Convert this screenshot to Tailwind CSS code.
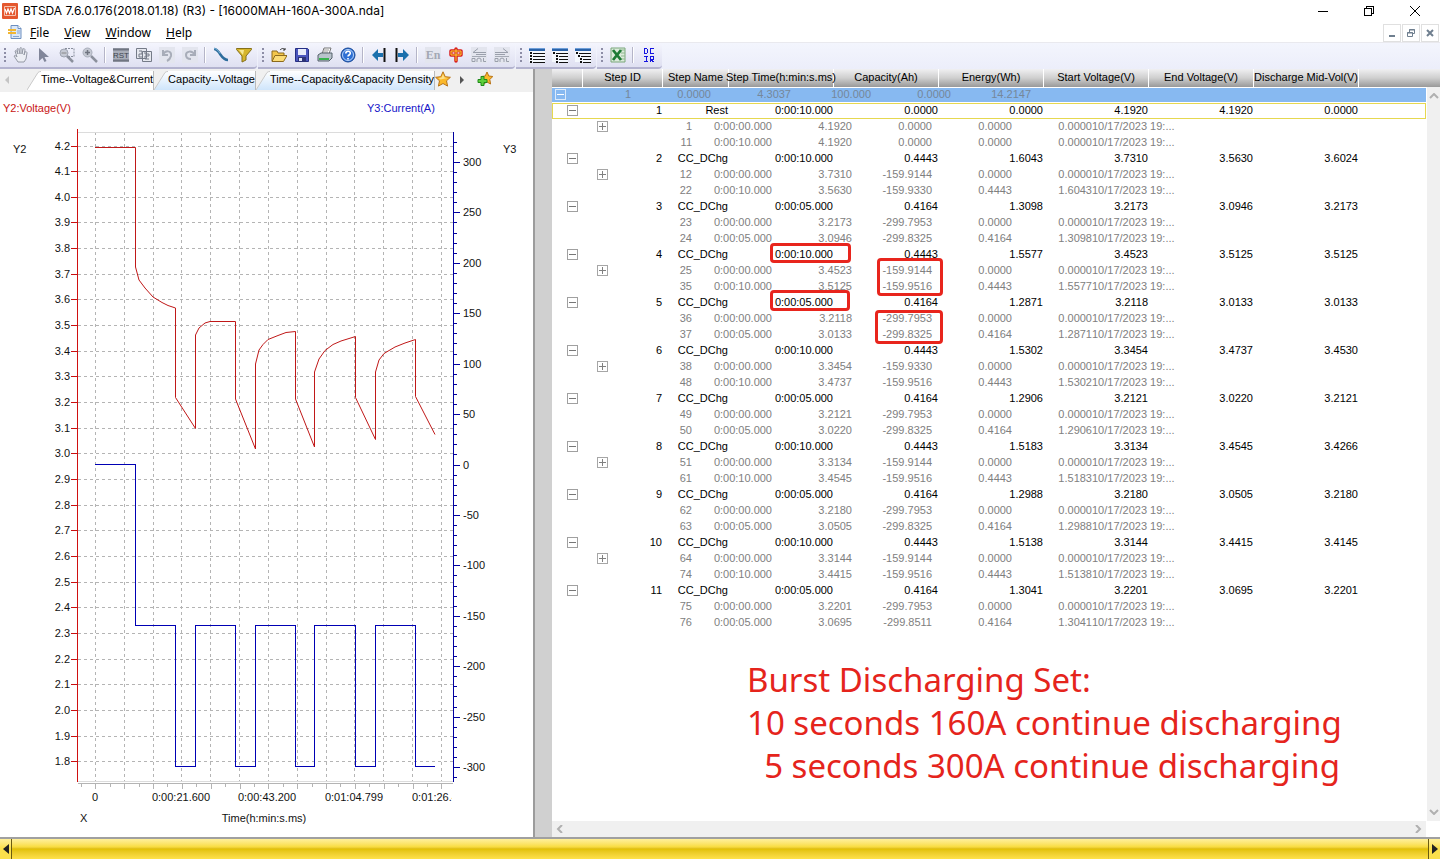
<!DOCTYPE html>
<html lang="en">
<head>
<meta charset="utf-8">
<title>BTSDA 7.6.0.176</title>
<script src="https://cdn.jsdelivr.net/npm/@tailwindcss/browser@4"></script>
</head>
<body class="flex h-screen flex-col overflow-hidden bg-white font-['Liberation_Sans',Arial,sans-serif] text-[11px] leading-4 text-black">

<!-- Title bar -->
<header class="flex h-[22px] shrink-0 items-center pr-0.5 pl-0.5 text-xs">
  <svg class="size-4" viewBox="0 0 16 16"><rect width="16" height="16" rx="1" fill="#e4572e"/><path d="M2.500 3.500h11v9h-11z" fill="none" stroke="#f6c3ae"/><path d="M3 6l1.500 4L6 6l1.500 4L9 6l1.500 4L12.500 5" fill="none" stroke="#fff" stroke-width="1.200"/></svg>
  <h1 class="ml-[5px] flex-1 font-[Inter,'Noto_Sans',sans-serif] whitespace-nowrap">BTSDA 7.6.0.176(2018.01.18) (R3) - [16000MAH-160A-300A.nda]</h1>
  <button aria-label="Minimize" class="flex h-full w-[46px] items-center justify-center"><svg class="size-3" viewBox="0 0 12 12" shape-rendering="crispEdges"><path d="M1 6.500h10" stroke="#000"/></svg></button>
  <button aria-label="Restore" class="flex h-full w-[46px] items-center justify-center"><svg class="size-3" viewBox="0 0 12 12" fill="none" stroke="#000" shape-rendering="crispEdges"><path d="M1.500 3.500h7v7h-7zM3.500 3.500v-2h7v7h-2"/></svg></button>
  <button aria-label="Close" class="flex h-full w-[46px] items-center justify-center"><svg class="size-3" viewBox="0 0 12 12"><path d="M1 1l10 10M11 1L1 11" stroke="#000"/></svg></button>
</header>

<!-- Menu bar -->
<nav class="flex h-5 shrink-0 items-center pl-2 font-['Noto_Sans','Open_Sans',sans-serif] text-xs">
  <svg class="size-[14px]" viewBox="0 0 14 14"><path d="M3 .5h7l3 3v10H3z" fill="#dbe8f8" stroke="#6c8fc0"/><path d="M10 .5v3h3" fill="#fff" stroke="#6c8fc0"/><path d="M5 11.500h6M9 6h3M9 8h3" stroke="#8aa6cf"/><path d="M0 4h8v2H0zM0 7h8v2H0z" fill="#f2b632"/></svg>
  <div class="ml-2 flex flex-1 gap-[15px] pt-0.5">
    <button><u>F</u>ile</button><button><u>V</u>iew</button><button><u>W</u>indow</button><button><u>H</u>elp</button>
  </div>
  <div class="flex gap-px pt-0.5 pr-px text-[#6f7f8f]">
    <button aria-label="Minimize document" class="flex size-[18px] items-center justify-center border border-[#e0e0e0]"><svg class="size-3" viewBox="0 0 12 12"><path d="M3 9h6" stroke="currentColor" stroke-width="2"/></svg></button>
    <button aria-label="Restore document" class="flex size-[18px] items-center justify-center border border-[#e0e0e0]"><svg class="size-3" viewBox="0 0 12 12" fill="none" stroke="currentColor"><path d="M2.500 5.500h5v4h-5zM2 6h6M4.500 5V2.500h5v4H8M4 3h6"/></svg></button>
    <button aria-label="Close document" class="flex size-[18px] items-center justify-center border border-[#e0e0e0]"><svg class="size-3" viewBox="0 0 12 12"><path d="M3 3l6 6M9 3L3 9" stroke="currentColor" stroke-width="2"/></svg></button>
  </div>
</nav>

<!-- Toolbars -->
<div class="flex h-[27px] shrink-0 gap-px border-t border-[#e9e9ee] bg-linear-to-b from-[#f3f5fd] to-[#eceefa]" id="toolbars"></div>

<main class="flex min-h-0 flex-1">
  <!-- Chart pane -->
  <section class="flex w-[533px] shrink-0 flex-col">
    <div class="flex h-[23px] shrink-0 items-start bg-[#f0f0f0] pt-0.5">
      <button aria-label="Previous tab" class="flex h-[18px] w-[27px] items-center pl-1"><svg class="h-2 w-1.5" viewBox="0 0 6 8"><path d="M5 0v8L1 4z" fill="#c4c4c4"/></svg></button>
      <button class="flex h-[19px] items-center"><svg class="h-[19px] w-[14px] shrink-0" viewBox="0 0 14 19"><path d="M0 19L11 1.500Q12 0 14 0V19z" fill="#fff"/><path d="M0 19L11 1.500Q12 .5 14 .5" fill="none" stroke="#c9c9c9"/></svg><span class="h-[19px] border-r border-[#bbb] bg-white text-left whitespace-nowrap">Time--Voltage&amp;Current</span></button>
      <button class="flex h-[19px] items-center"><svg class="h-[19px] w-[14px] shrink-0" viewBox="0 0 14 19"><defs><linearGradient id="tb" x2="0" y2="1"><stop stop-color="#fff"/><stop offset="1" stop-color="#cfe5fb"/></linearGradient></defs><path d="M0 19L11 1.500Q12 0 14 0V19z" fill="url(#tb)"/><path d="M0 19L11 1.500Q12 .5 14 .5" fill="none" stroke="#c9c9c9"/></svg><span class="h-[19px] border-r border-[#bbb] bg-linear-to-b from-white to-[#cfe5fb] text-left whitespace-nowrap">Capacity--Voltage</span></button>
      <button class="flex h-[19px] items-center"><svg class="h-[19px] w-[14px] shrink-0" viewBox="0 0 14 19"><path d="M0 19L11 1.500Q12 0 14 0V19z" fill="url(#tb)"/><path d="M0 19L11 1.500Q12 .5 14 .5" fill="none" stroke="#c9c9c9"/></svg><span class="h-[19px] border-r border-[#bbb] bg-linear-to-b from-white to-[#cfe5fb] text-left whitespace-nowrap">Time--Capacity&amp;Capacity Density</span></button>
      <button aria-label="Favourite"><svg class="size-4" viewBox="0 0 16 16"><path d="M8 .8l2.200 4.900 5.200.6-3.900 3.500 1.100 5.300L8 12.500l-4.600 2.600 1.100-5.300L.6 6.300l5.200-.6z" fill="#fbb829" stroke="#b8741a"/><path d="M8 3l1.500 3.500 3 .5-7 1.500-2-1.500 3-.5z" fill="#fde08a"/></svg></button>
      <button aria-label="Next tab" class="ml-2 flex h-[18px] items-center"><svg class="h-2 w-1.5" viewBox="0 0 6 8"><path d="M1 0v8l4-4z" fill="#555"/></svg></button>
      <button aria-label="Add favourite" class="ml-3"><svg class="size-4" viewBox="0 0 16 16"><path d="M10 1l1.800 4 4 .5-3 3 .8 4.500-3.600-2-3.600 2 .8-4.500-3-3 4-.5z" fill="#fbb829" stroke="#b8741a"/><path d="M4 5.500h3v3h3v3H7v3H4v-3H1v-3h3z" fill="#5fd03c" stroke="#1f8a1a"/></svg></button>
    </div>
    <svg id="chart" class="h-[745px] w-[533px] shrink-0" viewBox="0 92 533 745" font-size="11" fill="#111"></svg>
  </section>

  <!-- Splitter -->
  <div class="w-[19px] shrink-0 border-l-2 border-[#9c9c9c] bg-[#d0d0d0]"></div>

  <!-- Step table pane -->
  <section class="relative flex min-w-0 flex-1 flex-col">
    <table class="flex min-h-0 flex-1 flex-col">
      <thead class="block bg-linear-to-b from-[#f0f0f2] via-[#cfcfcf] to-[#999]">
        <tr class="flex h-[18px] text-center whitespace-nowrap">
          <th class="w-[31px] border-r border-white font-normal"></th>
          <th class="w-20 border-r border-white font-normal">Step ID</th>
          <th class="w-[66px] border-r border-white font-normal">Step Name</th>
          <th class="flex w-[105px] justify-center border-r border-white font-normal">Step Time(h:min:s.ms)</th>
          <th class="w-[105px] border-r border-white font-normal">Capacity(Ah)</th>
          <th class="w-[105px] border-r border-white font-normal">Energy(Wh)</th>
          <th class="w-[105px] border-r border-white font-normal">Start Voltage(V)</th>
          <th class="w-[105px] border-r border-white font-normal">End Voltage(V)</th>
          <th class="w-[105px] border-r border-white font-normal">Discharge Mid-Vol(V)</th>
        </tr>
      </thead>
      <tbody id="rows" class="mr-[14px] block flex-1"></tbody>
    </table>

    <div class="absolute top-[18px] right-0 bottom-4 flex w-[13px] flex-col items-center justify-between bg-[#f0f0f0] py-1.5">
      <button aria-label="Scroll up"><svg class="h-1.5 w-2.5" viewBox="0 0 10 6"><path d="M1 5l4-4 4 4" fill="none" stroke="#b0b0b0" stroke-width="2"/></svg></button>
      <button aria-label="Scroll down"><svg class="h-1.5 w-2.5" viewBox="0 0 10 6"><path d="M1 1l4 4 4-4" fill="none" stroke="#b0b0b0" stroke-width="2"/></svg></button>
    </div>
    <div class="mr-[14px] flex h-4 shrink-0 items-center justify-between bg-[#f0f0f0] px-1">
      <button aria-label="Scroll left"><svg class="h-2 w-2" viewBox="0 0 8 8"><path d="M6 0L2 4l4 4" fill="none" stroke="#b0b0b0" stroke-width="2"/></svg></button>
      <button aria-label="Scroll right"><svg class="h-2 w-2" viewBox="0 0 8 8"><path d="M2 0l4 4-4 4" fill="none" stroke="#b0b0b0" stroke-width="2"/></svg></button>
    </div>

    <!-- Red annotations over the table -->
    <div class="absolute top-[174px] left-[218px] h-5 w-[81px] rounded-sm border-3 border-[#e8251d]"></div>
    <div class="absolute top-[189px] left-[325px] h-[38px] w-[66px] rounded-sm border-3 border-[#e8251d]"></div>
    <div class="absolute top-[221px] left-[218px] h-[21px] w-20 rounded-sm border-3 border-[#e8251d]"></div>
    <div class="absolute top-[241px] left-[323px] h-[34px] w-[68px] rounded-sm border-3 border-[#e8251d]"></div>
    <div class="absolute top-[589px] left-[195px] font-['Noto_Sans','Open_Sans',sans-serif] text-[33px] leading-[43px] whitespace-pre text-[#e5241c]"><p>Burst Discharging Set:</p><p>10 seconds 160A continue discharging</p><p>  5 seconds 300A continue discharging</p></div>
  </section>
</main>

<!-- Bottom scroll bar -->
<footer class="flex h-[22px] shrink-0 border-t-2 border-[#a0a0a0] bg-linear-to-b from-[#fff09a] via-[#e2c100] to-[#ffe14a]">
  <button aria-label="Scroll left" class="flex w-3 items-center justify-center border-r border-[#6b5c10] bg-linear-to-b from-[#fff09a] from-0% via-[#fbe04c] via-45% to-[#fbe04c]"><svg class="h-2.5 w-1.5" viewBox="0 0 6 10"><path d="M6 0v10L0 5z" fill="#222"/></svg></button>
  <div class="flex-1 bg-linear-to-b from-[#fff09a] from-0% via-[#f9dc3a] via-40% to-transparent to-45%"></div>
  <button aria-label="Scroll right" class="flex w-3 items-center justify-center border-l border-[#6b5c10] bg-linear-to-b from-[#fff09a] from-0% via-[#fbe04c] via-45% to-[#fbe04c]"><svg class="h-2.5 w-1.5" viewBox="0 0 6 10"><path d="M0 0v10l6-5z" fill="#222"/></svg></button>
</footer>

<script>
// Toolbar groups: [label, 16x16 icon markup]; null is a separator
const list = (...rows) => `<path d="M0 1h16v3H0z" fill="#2a62a8"/><path d="M0 1h16v1H0z" fill="#6f9fd8"/><path d="M0 4h16v11H0z" fill="#f4f8fd"/><g shape-rendering="crispEdges">` + rows.map((x, i) => `<path d="M${x} ${5 + i * 3}h2v2h-2z" fill="#111"/><path d="M${x + 3} ${6.5 + i * 3}H16" stroke="#111"/>`).join('') + '</g>';
const seq = d => `<path d="M0 0h16v16H0z" fill="#e3e5ee"/><path d="${d}" fill="none" stroke="#9a9fab"/><path d="M1 9.500h14" stroke="#a5aab5"/><path d="M1 11.500h3v3H1zM6 15v-3l2-1 2 1v3M12.500 11v3.500H15" fill="none" stroke="#9a9fab"/>`;
const groups = [
 [["Pan",`<path d="M5 15c-1-2-3-4-4-6 1-1 2 0 3 1L2 4c1-1 2 0 2 1l1 2-1-5c1-1 2 0 2 1l1 4V1c1-1 2 0 2 1v5l1-5c1-1 2 0 2 1l-1 5 1-3c1-1 2 0 2 1l-1 6-2 3z" fill="#eceef4" stroke="#9499a5"/>`],
  ["Select",`<path d="M3 1v13l3.500-3 2 4 2-1-2-4H13z" fill="#81869a"/>`],
  ["Zoom window",`<path d="M6 1.500h9v8H9" fill="none" stroke="#888e9c" stroke-dasharray="2 1"/><circle cx="5" cy="6" r="4" fill="#c5c9d3" stroke="#a0a5b2"/><path d="M8 9l6 6" stroke="#8b909c" stroke-width="2.500"/><path d="M2.500 6h5" stroke="#888"/>`],
  ["Zoom in",`<circle cx="5.500" cy="5.500" r="4.500" fill="#c5c9d3" stroke="#a9aebb"/><path d="M3 5.500h5M5.500 3v5" stroke="#6f7480" stroke-width="1.500"/><path d="M9 9l6 6" stroke="#8b909c" stroke-width="2.500"/>`],
  null,
  ["Reset",`<path d="M0 1h16v14H0z" fill="#a9aeb9"/><path d="M0 2.500h16M0 13.500h16" stroke="#707582" stroke-width="2"/><text x="8" y="11" text-anchor="middle" font-size="8" fill="#3f444f">RST</text>`],
  ["Cascade",`<path d="M.5 1.500h10v10H.5zM6.500 4.500h9v10h-9z" fill="#e6e8ef" stroke="#757b88"/><path d="M3 4h3v3H3v3h3M9 4v3M9 7h4v2H9v3h4" fill="none" stroke="#757b88"/>`],
  ["Undo",`<path d="M0 0h16v16H0z" fill="#e3e5ee"/><path d="M4 3v5h5M4 8c2-5 9-5 8 1-.5 2-2 4-4 5" fill="none" stroke="#a8adb9" stroke-width="2"/>`],
  ["Redo",`<path d="M0 0h16v16H0z" fill="#e3e5ee"/><path d="M13 3v5H8M13 8c-3-5-9-4-9 0 0 3 2 4 5 4" fill="none" stroke="#a8adb9" stroke-width="2"/>`],
  null,
  ["Curve",`<path d="M1 2c3 0 4 2 6 5s4 6 8 6" fill="none" stroke="#2c6c9c" stroke-width="2.500"/><path d="M1 1.500c3 0 4 2 6 5" fill="none" stroke="#7bb2d6"/>`],
  ["Filter",`<path d="M.5 1.500h15v1L10 9v4l-4 2V9L.5 2.500z" fill="#d6b52b" stroke="#85701a"/><path d="M3 3h5L7 8z" fill="#f6e894"/>`]],
 [["Open",`<path d="M1 14V4h5l1 2h6v3" fill="#f3c64a" stroke="#8c6a1c"/><path d="M1 14.500l3-6h12l-3.500 6z" fill="#fbdc76" stroke="#8c6a1c"/><path d="M9 3c2-2 4-2 5 0V1m0 2h-2" fill="none" stroke="#333"/>`],
  ["Save",`<path d="M1.500 1.500h12l1 1v12h-13z" fill="#4a55bd" stroke="#252f85"/><path d="M4 2h8v6H4z" fill="#e7ebfa"/><path d="M4 10h8v5H4z" fill="#2c3377"/><path d="M5 11h3v3H5z" fill="#dfe4f6"/>`],
  ["Print",`<path d="M5 7l2-6h7l-2 6z" fill="#fff" stroke="#777"/><path d="M7 3h5M6 5h5" stroke="#999"/><path d="M1 8l3-2h11v5l-3 3H1z" fill="#b9c3cc" stroke="#55606a"/><path d="M2 12h10" stroke="#37b24d" stroke-width="2"/>`],
  ["Help",`<circle cx="8" cy="8" r="7" fill="#2d6fd4" stroke="#174795"/><circle cx="8" cy="8" r="5.500" fill="none" stroke="#b7d2f7"/><path d="M5.800 6.500c0-3 4.500-3 4.500-.3C10.300 8 8 8 8 9.600M8 11v1.600" fill="none" stroke="#fff" stroke-width="1.600"/>`],
  null,
  ["Previous step",`<path d="M1 8l6-6v4h5v4H7v4z" fill="#1b70ad"/><path d="M13.500 1v14" stroke="#111" stroke-width="2"/>`],
  ["Next step",`<path d="M15 8L9 2v4H4v4h5v4z" fill="#1b70ad"/><path d="M2.500 1v14" stroke="#111" stroke-width="2"/>`],
  null,
  ["English",`<path d="M0 0h16v16H0z" fill="#e3e5ee"/><text x="8" y="12" text-anchor="middle" font-size="12" font-weight="bold" font-family="Liberation Serif, serif" fill="#a3a8b4">En</text>`],
  ["Chinese",`<path d="M8 2v12M3 4h10v4H3z" fill="none" stroke="#d81f1f" stroke-width="3.500" stroke-linejoin="round" stroke-linecap="round"/><path d="M4.500 5.500h2v1h-2zM9.500 5.500h2v1h-2z" fill="#fff"/><path d="M8 2v12M3 4h10v4H3z" fill="none" stroke="#fbd52b"/>`],
  ["Sequence back",seq("M15 5.500H2l5-4M5 7.500h10")],
  ["Sequence forward",seq("M1 5.500h13l-5-4M1 7.500h10")]],
 [["List one",list(1,1,1,1)],["List two",list(1,4,4,4)],["List three",list(1,3,5,5)]],
 [["Export to Excel",`<path d="M1 1h14v14H1z" fill="#dcebdc" stroke="#7aa77a"/><path d="M11 3h4M11 6h4M11 9h4M11 12h4" stroke="#8fb98f"/><path d="M3 3l8 10M11 3L3 13" stroke="#1c7a35" stroke-width="2.800"/>`],
  null,
  ["DC IR",`<g shape-rendering="crispEdges" fill="none" stroke="#1414e0"><path d="M3.500 1.500h2l1 1v3l-1 1h-2zM13 1.500H9.500v5H13M3 9.500h4M5 9.500v5M3 14.500h4M9.500 15V9.500H12.500v2.500H9.500l3 3"/></g>`]]
];
document.getElementById('toolbars').innerHTML = groups.map(g =>
 `<div role="toolbar" class="flex h-[26px] items-center rounded-br-sm border-b-2 border-[#b3b3cf] bg-linear-to-b from-[#f4f5fd] to-[#dfe0f1] pr-0.5">
  <div class="ml-1 h-4 w-[5px] shrink-0"><svg class="h-4 w-0.5" viewBox="0 0 2 16"><path d="M1 1v15" stroke="#8d8da6" stroke-width="2" stroke-dasharray="2 2"/></svg></div>` +
 g.map(i => i ? `<button aria-label="${i[0]}" class="flex h-6 w-[23px] items-center justify-center"><svg class="size-4" viewBox="0 0 16 16">${i[1]}</svg></button>`
  : `<div class="mx-[3px] h-4 w-0.5 border-l border-[#b5b5c8] bg-white"></div>`).join('') + `</div>`).join('');

// Chart
const yv = v => Math.round(145.5 + (4.2 - v) * 256.6) + 0.5;
const ya = a => Math.round(464.5 - a * 1.0085) + 0.5;
let s = '<g shape-rendering="crispEdges" fill="none">';
for (let i = 0; i < 13; i++) s += `<path d="M${Math.round(95 + i * 28.83) + 0.5} 132V782" stroke="#b4b4b4" stroke-dasharray="3 3"/>`;
for (let i = 0; i < 25; i++) s += `<path d="M78 ${yv(4.2 - i / 10)}H453" stroke="#b4b4b4" stroke-dasharray="3 3"/><path d="M71 ${yv(4.2 - i / 10)}H77" stroke="#c81010"/>`;
s += '<path d="M78 132.500H453M78 781.500H453" stroke="#dcdcdc"/><path d="M78 783.500H453" stroke="#b4b4b4"/><path d="M77.500 129V782" stroke="#d01010"/><path d="M453.500 132V782" stroke="#0000a0"/>';
for (let i = 0; i < 26; i++) s += `<path d="M${Math.round(81 + i * 14.415) + 0.5} 784v${i % 2 ? 5 : 3}" stroke="#b4b4b4"/>`;
for (let a = 320; a >= -310; a -= 10) s += `<path d="M454 ${ya(a)}h${a % 50 ? 3 : 6}" stroke="#0000a0"/>`;
s += '<path stroke="#0000b4" d="M95 464.500H135.500V625.500H175.500V766.500H195.500V625.500H235.500V766.500H255.500V625.500H295.500V766.500H314.500V625.500H355.500V766.500H375.500V625.500H415.500V766.500H435"/></g>';
s += '<path fill="none" stroke="#c01818" d="M95 147.500H135.500V267L139 280 145 288 153 297 162 302.500 168 305.500 175.500 308V397.500L195.500 428.500V335L199 328 205 323 210 321.500H235.500V399L255.500 449V364L259 350 263 344.500 268 339.500 278 335.500 286 332.500 295.500 331.500V399L314.500 447V372L319 359 325 350.500 333 344.500 341 341 355.500 336.500V397.500L375.500 439.500V372L379 360 384 353.500 395 347 405 343 415.500 339.500V396.500L435 434.500"/>';
const t = (x, y, a, c, f) => `<text x="${x}" y="${y}" text-anchor="${a}"${f ? ` fill="${f}"` : ''}>${c}</text>`;
for (let i = 0; i < 25; i++) s += t(70, yv(4.2 - i / 10) + 3.5, 'end', (4.2 - i / 10).toFixed(1));
for (let a = 300; a >= -300; a -= 50) s += t(463, ya(a) + 3.5, 'start', a);
s += t(3, 112, 'start', 'Y2:Voltage(V)', '#c81414') + t(367, 112, 'start', 'Y3:Current(A)', '#1414c8')
  + t(13, 153, 'start', 'Y2') + t(503, 153, 'start', 'Y3') + t(80, 822, 'start', 'X') + t(264, 822, 'middle', 'Time(h:min:s.ms)')
  + t(95, 801, 'middle', '0') + t(181, 801, 'middle', '0:00:21.600') + t(267, 801, 'middle', '0:00:43.200') + t(354, 801, 'middle', '0:01:04.799')
  + '<svg x="412" y="785" width="40" height="24">' + t(0, 16, 'start', '0:01:26.400') + '</svg>';
document.getElementById('chart').innerHTML = s;

// Steps: id|name|time|capacity|energy|start|end|mid, then detail records, "+" marks a folded group
const data = `1|Rest|0:00:10.000|0.0000|0.0000|4.1920|4.1920|0.0000
+1|0:00:00.000|4.1920|0.0000|0.0000|0.0000
-11|0:00:10.000|4.1920|0.0000|0.0000|0.0000
2|CC_DChg|0:00:10.000|0.4443|1.6043|3.7310|3.5630|3.6024
+12|0:00:00.000|3.7310|-159.9144|0.0000|0.0000
-22|0:00:10.000|3.5630|-159.9330|0.4443|1.6043
3|CC_DChg|0:00:05.000|0.4164|1.3098|3.2173|3.0946|3.2173
-23|0:00:00.000|3.2173|-299.7953|0.0000|0.0000
-24|0:00:05.000|3.0946|-299.8325|0.4164|1.3098
4|CC_DChg|0:00:10.000|0.4443|1.5577|3.4523|3.5125|3.5125
+25|0:00:00.000|3.4523|-159.9144|0.0000|0.0000
-35|0:00:10.000|3.5125|-159.9516|0.4443|1.5577
5|CC_DChg|0:00:05.000|0.4164|1.2871|3.2118|3.0133|3.0133
-36|0:00:00.000|3.2118|-299.7953|0.0000|0.0000
-37|0:00:05.000|3.0133|-299.8325|0.4164|1.2871
6|CC_DChg|0:00:10.000|0.4443|1.5302|3.3454|3.4737|3.4530
+38|0:00:00.000|3.3454|-159.9330|0.0000|0.0000
-48|0:00:10.000|3.4737|-159.9516|0.4443|1.5302
7|CC_DChg|0:00:05.000|0.4164|1.2906|3.2121|3.0220|3.2121
-49|0:00:00.000|3.2121|-299.7953|0.0000|0.0000
-50|0:00:05.000|3.0220|-299.8325|0.4164|1.2906
8|CC_DChg|0:00:10.000|0.4443|1.5183|3.3134|3.4545|3.4266
+51|0:00:00.000|3.3134|-159.9144|0.0000|0.0000
-61|0:00:10.000|3.4545|-159.9516|0.4443|1.5183
9|CC_DChg|0:00:05.000|0.4164|1.2988|3.2180|3.0505|3.2180
-62|0:00:00.000|3.2180|-299.7953|0.0000|0.0000
-63|0:00:05.000|3.0505|-299.8325|0.4164|1.2988
10|CC_DChg|0:00:10.000|0.4443|1.5138|3.3144|3.4415|3.4145
+64|0:00:00.000|3.3144|-159.9144|0.0000|0.0000
-74|0:00:10.000|3.4415|-159.9516|0.4443|1.5138
11|CC_DChg|0:00:05.000|0.4164|1.3041|3.2201|3.0695|3.2201
-75|0:00:00.000|3.2201|-299.7953|0.0000|0.0000
-76|0:00:05.000|3.0695|-299.8511|0.4164|1.3041`.split('\n');
const box = (d, label) => `<button aria-label="${label}" class="block size-[11px]"><svg class="block size-[11px]" viewBox="0 0 11 11" fill="none" stroke="currentColor" shape-rendering="crispEdges"><path d="M.5 .5h10v10H.5z" opacity=".7"/><path d="${d}"/></svg></button>`;
const minus = box('M2 5.500h7', 'Collapse'), plus = box('M2 5.500h7M5.500 2v7', 'Expand');
let h = `<tr class="my-px flex h-[14px] items-center bg-[#87b9f1] pb-0.5 text-[#75879a]"><td class="w-[30px] pl-[3px] text-white">${minus}</td><td class="w-[49px] text-right">1</td>`
  + ['0.0000', '4.3037', '100.000', '0.0000', '14.2147'].map(c => `<td class="w-20 text-right">${c}</td>`).join('') + '</tr>';
data.forEach((r, n) => {
  const c = r.split('|');
  if (r[0] === '+' || r[0] === '-') {
    h += `<tr class="flex h-4 items-center pb-0.5 text-[#808080]"><td class="w-[60px] pl-[45px]">${r[0] === '+' ? plus : ''}</td>`
      + c.map((x, i) => i ? `<td class="w-20 text-right">${x}</td>` : `<td class="w-20 text-right">${x.slice(1)}</td>`).join('')
      + '<td class="w-20 whitespace-nowrap">10/17/2023 19:...</td></tr>';
  } else {
    h += (n ? '<tr class="flex h-4 items-center pb-0.5">' : '<tr class="flex h-4 items-center pb-0.5 outline outline-[#e6d850] -outline-offset-1">')
      + `<td class="w-[30px] pl-[15px] text-[#777]">${minus}</td><td class="w-20 text-right">${c[0]}</td><td class="w-[66px] text-right">${c[1]}</td>`
      + c.slice(2).map(x => `<td class="w-[105px] text-right">${x}</td>`).join('') + '</tr>';
  }
});
document.getElementById('rows').innerHTML = h;
</script>
</body>
</html>
